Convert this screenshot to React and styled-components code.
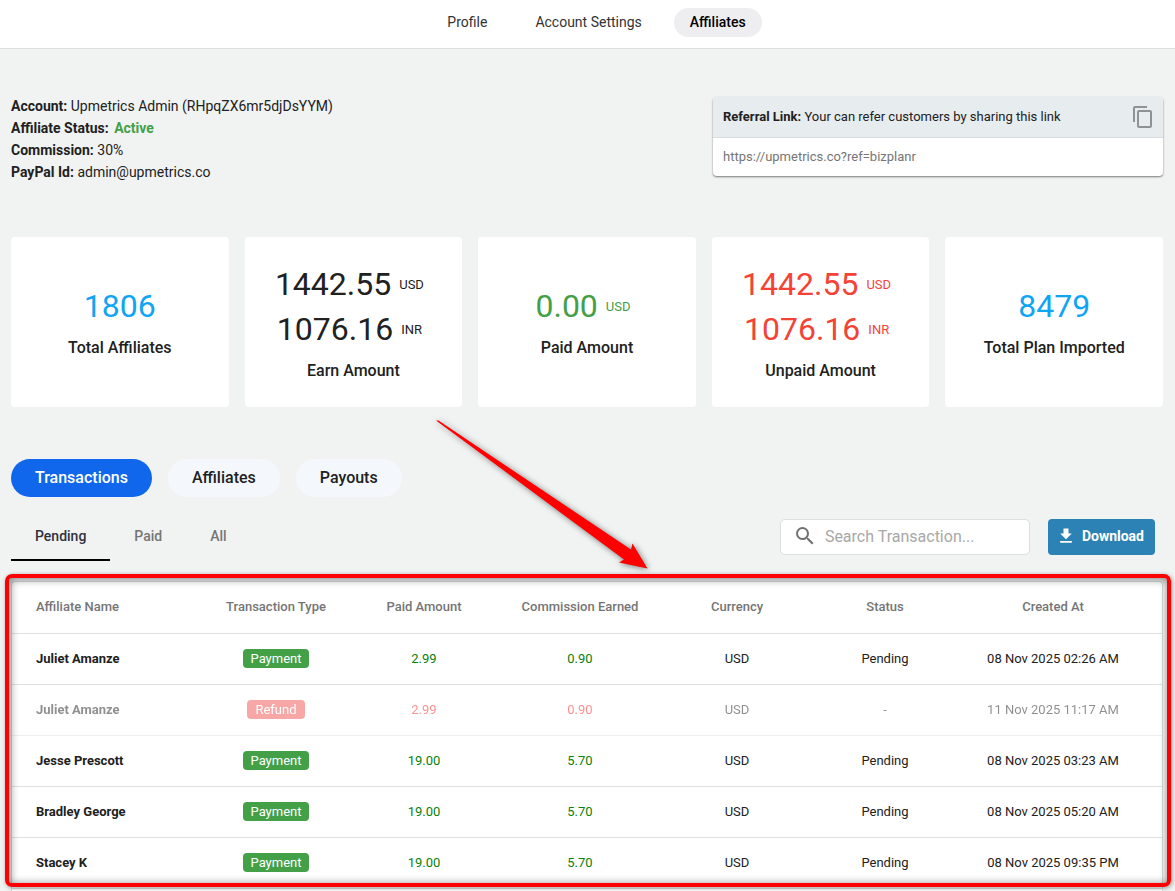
import { useState } from "react"
import styled, { createGlobalStyle } from "styled-components"
import { MdContentCopy, MdSearch, MdFileDownload } from "react-icons/md"

const GlobalStyle = createGlobalStyle`
  * {
    box-sizing: border-box;
  }
  body {
    margin: 0;
    background: #f1f3f3;
    color: #212121;
    font-family: Roboto, "Liberation Sans", sans-serif;
    font-size: 14px;
    line-height: 22px;
  }
  button, input {
    font-family: inherit;
  }
`
const Page = styled.div`
  position: relative;
  display: flex;
  flex-direction: column;
  min-height: 100vh;
`
const TopNav = styled.nav`
  display: flex;
  align-items: center;
  justify-content: center;
  gap: 16px;
  height: 49px;
  padding: 0 0 4px 18px;
  background: #fff;
  border-bottom: 1px solid #dadfde;
`
const NavLink = styled.a`
  height: 29px;
  padding: 0 16px;
  border-radius: 15px;
  line-height: 29px;
  text-decoration: none;
  color: ${props => props.$active ? "#000" : "#333"};
  background: ${props => props.$active ? "#eeeef0" : "transparent"};
  font-weight: ${props => props.$active ? 500 : 400};
`
const Content = styled.main`
  display: flex;
  flex: 1;
  flex-direction: column;
  padding: 46px 12px 0 11px;
`
const Summary = styled.section`
  display: flex;
  align-items: flex-start;
  justify-content: space-between;
  height: 142px;
`
const InfoLine = styled.div`
  b {
    font-weight: 700;
  }
`
const StatusText = styled.span`
  margin-left: 2px;
  color: #43a047;
  font-weight: 700;
`
const Referral = styled.div`
  width: 450px;
  margin-top: 2px;
  border-radius: 4px;
  background: #fff;
  box-shadow: 0 1px 2px rgba(0, 0, 0, 0.5);
  font-size: 13px;
  overflow: hidden;
`
const ReferralHead = styled.div`
  display: flex;
  align-items: center;
  justify-content: space-between;
  height: 41px;
  padding: 0 8px 0 10px;
  background: #e7ecef;
  border-bottom: 1px solid #d9dcdd;
  b {
    font-weight: 700;
  }
`
const CopyButton = styled.button`
  display: flex;
  padding: 0;
  border: 0;
  background: none;
  color: #8e9294;
  font-size: 24px;
  cursor: pointer;
`
const ReferralUrl = styled.div`
  height: 38px;
  padding: 0 10px;
  line-height: 38px;
  color: #757575;
`
const Stats = styled.section`
  display: grid;
  grid-template-columns: repeat(5, 1fr);
  gap: 16px;
`
const StatCard = styled.div`
  display: flex;
  flex-direction: column;
  align-items: center;
  justify-content: center;
  height: 170px;
  padding-bottom: 1px;
  border-radius: 4px;
  background: #fff;
`
const Amount = styled.div`
  display: flex;
  align-items: center;
  color: ${props => props.$color};
  font-size: 32px;
  line-height: 45px;
  small {
    padding: 0 8px;
    font-size: 13px;
  }
`
const StatLabel = styled.div`
  margin-top: 8px;
  font-size: 16px;
  font-weight: 500;
  line-height: 22px;
`
const Pills = styled.div`
  display: flex;
  gap: 16px;
  margin-top: 52px;
`
const Pill = styled.button`
  height: 38px;
  padding: 0 24px 2px;
  border: 0;
  border-radius: 19px;
  background: ${props => props.$active ? "#1067eb" : "#f4f8fc"};
  color: ${props => props.$active ? "#fff" : "#212121"};
  font-size: 16px;
  font-weight: 500;
  cursor: pointer;
`
const Toolbar = styled.div`
  display: flex;
  align-items: center;
  justify-content: space-between;
  height: 48px;
  margin: 16px 0 20px;
  padding-right: 8px;
`
const Group = styled.div`
  display: flex;
  gap: ${props => props.$gap || 0}px;
`
const Tab = styled.button`
  height: 48px;
  padding: 0 24px;
  border: 0;
  border-bottom: 2px solid ${props => props.$active ? "#000" : "transparent"};
  background: none;
  color: ${props => props.$active ? "#30313d" : "#757575"};
  font-size: 14px;
  font-weight: 500;
  cursor: pointer;
`
const SearchBox = styled.label`
  display: flex;
  align-items: center;
  gap: 8px;
  width: 250px;
  height: 36px;
  padding: 0 12px 2px 12px;
  border: 1px solid #dcdfde;
  border-radius: 5px;
  background: #fff;
  color: #707070;
  font-size: 24px;
  svg {
    flex-shrink: 0;
  }
`
const SearchInput = styled.input`
  width: 100%;
  min-width: 0;
  padding: 0;
  border: 0;
  outline: 0;
  background: none;
  font-size: 16px;
  &::placeholder {
    color: #a8a8a8;
  }
`
const DownloadButton = styled.button`
  display: flex;
  align-items: center;
  gap: 6px;
  height: 36px;
  padding: 0 11px 2px 8px;
  border: 0;
  border-radius: 4px;
  background: #2d82b5;
  color: #fff;
  font-size: 14px;
  font-weight: 700;
  cursor: pointer;
  svg {
    font-size: 20px;
  }
`
const TableCard = styled.section`
  position: relative;
  flex: 1;
  border: 1px solid #d8dada;
  border-bottom: 0;
  border-radius: 4px 4px 0 0;
  background: #fff;
`
const Table = styled.table`
  width: 100%;
  table-layout: fixed;
  border-collapse: separate;
  border-spacing: 0;
  font-size: 13px;
`
const Th = styled.th`
  width: ${props => props.$width}px;
  height: 52px;
  padding: 0 0 2px ${props => props.$left ? 24 : 0}px;
  border-bottom: 1px solid #e0e0e0;
  color: #757575;
  font-weight: 500;
  text-align: ${props => props.$left ? "left" : "center"};
`
const Tr = styled.tr`
  opacity: ${props => props.$faded ? 0.5 : 1};
`
const Td = styled.td`
  height: 51px;
  padding: 0;
  border-bottom: 1px solid #e0e0e0;
  color: ${props => props.$color || "#212121"};
  text-align: center;
`
const NameTd = styled(Td)`
  padding-left: 24px;
  font-weight: 700;
  text-align: left;
`
const Badge = styled.span`
  display: inline-block;
  padding: 0 8px;
  border-radius: 4px;
  background: ${props => props.$refund ? "#f05350" : "#43a047"};
  color: #fff;
  line-height: 19px;
`
const Highlight = styled.div`
  position: absolute;
  inset: -8px -9px 4px -7px;
  border: 4px solid #ff0000;
  border-radius: 7px;
  box-shadow: 1px 1px 4px rgba(0, 0, 0, 0.4), inset 1px 1px 8px rgba(0, 0, 0, 0.5);
  pointer-events: none;
`
const Arrow = styled.svg`
  position: absolute;
  top: 412px;
  left: 430px;
  filter: drop-shadow(1px 1px 3px rgba(0, 0, 0, 0.5));
  pointer-events: none;
`

const stats = [
  { label: "Total Affiliates", color: "#0fa5f5", amounts: [["1806"]] },
  { label: "Earn Amount", color: "#212121", amounts: [["1442.55", "USD"], ["1076.16", "INR"]] },
  { label: "Paid Amount", color: "#43a047", amounts: [["0.00", "USD"]] },
  { label: "Unpaid Amount", color: "#f44336", amounts: [["1442.55", "USD"], ["1076.16", "INR"]] },
  { label: "Total Plan Imported", color: "#0fa5f5", amounts: [["8479"]] },
]

const columns = [
  ["Affiliate Name", 204],
  ["Transaction Type", 120],
  ["Paid Amount", 176],
  ["Commission Earned", 136],
  ["Currency", 178],
  ["Status", 118],
  ["Created At", 218],
]

const transactions = [
  { name: "Juliet Amanze", type: "Payment", paid: "2.99", earned: "0.90", status: "Pending", date: "08 Nov 2025 02:26 AM" },
  { name: "Juliet Amanze", type: "Refund", paid: "2.99", earned: "0.90", status: "-", date: "11 Nov 2025 11:17 AM" },
  { name: "Jesse Prescott", type: "Payment", paid: "19.00", earned: "5.70", status: "Pending", date: "08 Nov 2025 03:23 AM" },
  { name: "Bradley George", type: "Payment", paid: "19.00", earned: "5.70", status: "Pending", date: "08 Nov 2025 05:20 AM" },
  { name: "Stacey K", type: "Payment", paid: "19.00", earned: "5.70", status: "Pending", date: "08 Nov 2025 09:35 PM" },
]

function TransactionRow({ item }) {
  const refund = item.type === "Refund"
  const amountColor = refund ? "#ff1f1f" : "#0b800b"

  return (
    <Tr $faded={refund}>
      <NameTd>{item.name}</NameTd>
      <Td><Badge $refund={refund}>{item.type}</Badge></Td>
      <Td $color={amountColor}>{item.paid}</Td>
      <Td $color={amountColor}>{item.earned}</Td>
      <Td>USD</Td>
      <Td>{item.status}</Td>
      <Td>{item.date}</Td>
    </Tr>
  )
}

function App() {
  const [section, setSection] = useState("Transactions")
  const [tab, setTab] = useState("Pending")
  const [search, setSearch] = useState("")

  const rows = transactions.filter((item) => {
    return item.name.toLowerCase().includes(search.toLowerCase())
  })

  return (
    <Page>
      <GlobalStyle />
      <TopNav>
        <NavLink href="#profile">Profile</NavLink>
        <NavLink href="#settings">Account Settings</NavLink>
        <NavLink href="#affiliates" $active>Affiliates</NavLink>
      </TopNav>
      <Content>
        <Summary>
          <div>
            <InfoLine><b>Account:</b> Upmetrics Admin (RHpqZX6mr5djDsYYM)</InfoLine>
            <InfoLine><b>Affiliate Status:</b> <StatusText>Active</StatusText></InfoLine>
            <InfoLine><b>Commission:</b> 30%</InfoLine>
            <InfoLine><b>PayPal Id:</b> admin@upmetrics.co</InfoLine>
          </div>
          <Referral>
            <ReferralHead>
              <span><b>Referral Link:</b> Your can refer customers by sharing this link</span>
              <CopyButton aria-label="Copy link"><MdContentCopy /></CopyButton>
            </ReferralHead>
            <ReferralUrl>https://upmetrics.co?ref=bizplanr</ReferralUrl>
          </Referral>
        </Summary>

        <Stats>
          {stats.map((stat) => (
            <StatCard key={stat.label}>
              {stat.amounts.map(([value, unit]) => (
                <Amount key={value} $color={stat.color}>
                  {value}
                  {unit && <small>{unit}</small>}
                </Amount>
              ))}
              <StatLabel>{stat.label}</StatLabel>
            </StatCard>
          ))}
        </Stats>

        <Pills>
          {["Transactions", "Affiliates", "Payouts"].map((name) => (
            <Pill key={name} $active={section === name} onClick={() => setSection(name)}>{name}</Pill>
          ))}
        </Pills>

        <Toolbar>
          <Group>
            {["Pending", "Paid", "All"].map((name) => (
              <Tab key={name} $active={tab === name} onClick={() => setTab(name)}>{name}</Tab>
            ))}
          </Group>
          <Group $gap={18}>
            <SearchBox>
              <MdSearch />
              <SearchInput
                aria-label="Search Transaction"
                placeholder="Search Transaction..."
                value={search}
                onChange={(e) => setSearch(e.target.value)}
              />
            </SearchBox>
            <DownloadButton><MdFileDownload />Download</DownloadButton>
          </Group>
        </Toolbar>

        <TableCard>
          <Table>
            <thead>
              <tr>
                {columns.map(([name, width], i) => (
                  <Th key={name} $width={width} $left={i === 0}>{name}</Th>
                ))}
              </tr>
            </thead>
            <tbody>
              {rows.map((item) => (
                <TransactionRow key={item.date} item={item} />
              ))}
            </tbody>
          </Table>
          <Highlight />
        </TableCard>
      </Content>
      <Arrow width="230" height="170" viewBox="430 412 230 170" aria-hidden="true">
        <path d="M436 420.500L438.500 420.500L631 549.500L632.500 543.500L647.500 568.500L619 562.500L624 559.500Z" fill="#ff0000" />
      </Arrow>
    </Page>
  )
}

export default App
